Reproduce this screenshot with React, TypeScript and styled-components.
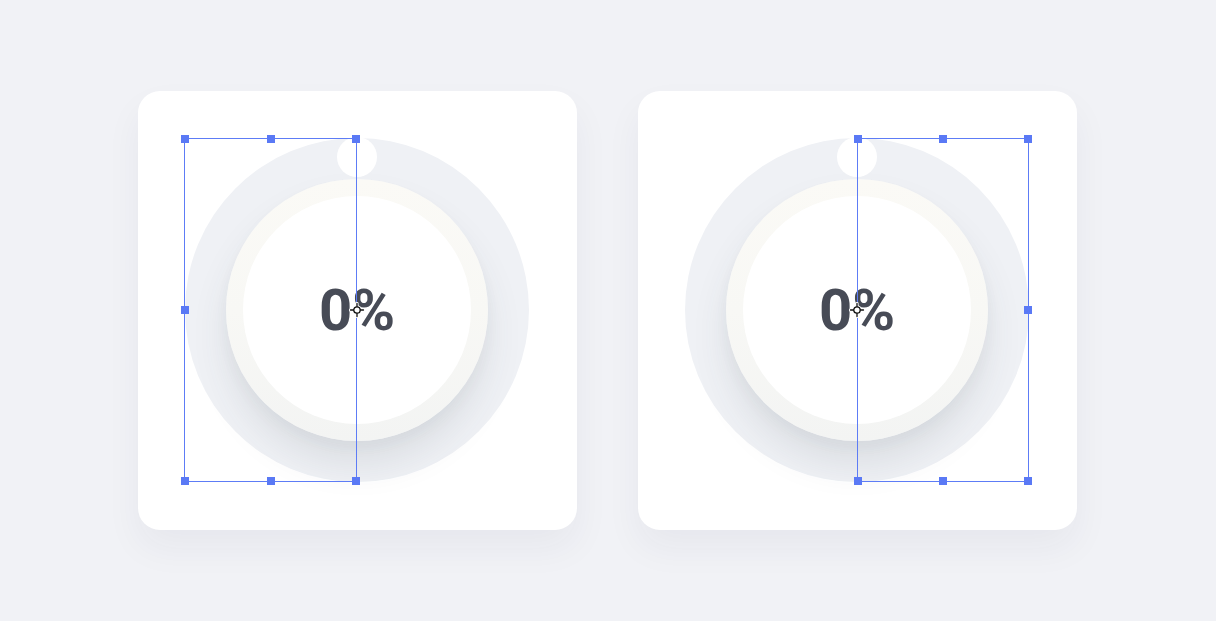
import React from 'react';
import styled, {createGlobalStyle} from 'styled-components';

const GlobalStyle = createGlobalStyle`
  html, body {
    margin: 0;
    padding: 0;
    background: #f1f2f6;
    font-family: Roboto, "Liberation Sans", sans-serif;
  }
`;

const Page = styled.main`
  box-sizing: border-box;
  display: flex;
  align-items: center;
  justify-content: center;
  gap: 61px;
  width: 1216px;
  height: 621px;
  padding: 0 2px 1px 0;
  background: #f1f2f6;
`;

const Card = styled.section`
  display: flex;
  align-items: center;
  justify-content: center;
  width: 439px;
  height: 439px;
  border-radius: 22px;
  background: #ffffff;
  box-shadow: 0 18px 36px rgba(40, 48, 70, 0.05);
`;

const Dial = styled.div`
  position: relative;
  display: flex;
  align-items: center;
  justify-content: center;
  width: 344px;
  height: 344px;
  border-radius: 50%;
  background: #eff1f5;
`;

const Knob = styled.span`
  position: absolute;
  top: -1px;
  left: 50%;
  width: 40px;
  height: 40px;
  margin-left: -20px;
  border-radius: 50%;
  background: #ffffff;
`;

const Ring = styled.div`
  display: flex;
  align-items: center;
  justify-content: center;
  width: 262px;
  height: 262px;
  border-radius: 50%;
  background: linear-gradient(180deg, #fbfaf6 0%, #f8f8f5 50%, #f3f4f3 100%);
  box-shadow: 0 24px 36px rgba(60, 66, 80, 0.1), 0 8px 14px rgba(60, 66, 80, 0.04);
`;

const Face = styled.div`
  display: flex;
  align-items: center;
  justify-content: center;
  width: 228px;
  height: 228px;
  border-radius: 50%;
  background: #ffffff;
`;

const Value = styled.span`
  font-size: 58px;
  font-weight: 700;
  color: #474b56;
  line-height: 1;
`;

const Selection = styled.div<{$side: 'left' | 'right'}>`
  position: absolute;
  top: 0;
  bottom: 0;
  ${({$side}) => ($side === 'left' ? 'left: -1px; right: 50%;' : 'left: 50%; right: 0;')}
  border: 1.5px solid #5d7cf6;
  pointer-events: none;
`;

const Handle = styled.span<{$x: number; $y: number}>`
  position: absolute;
  left: ${({$x}) => $x}%;
  top: ${({$y}) => $y}%;
  width: 8px;
  height: 8px;
  margin: -4px 0 0 -4px;
  background: #5a79f5;
`;

const Cursor = styled.svg`
  position: absolute;
  left: 50%;
  top: 50%;
  margin: -8px 0 0 -8px;
`;

const handles: Array<[number, number]> = [
  [0, 0], [50, 0], [100, 0],
  [0, 50], [100, 50],
  [0, 100], [50, 100], [100, 100],
];

const Knobber: React.FC<{side: 'left' | 'right'}> = ({side}) => (
  <Card>
    <Dial>
      <Knob />
      <Ring>
        <Face>
          <Value>0%</Value>
        </Face>
      </Ring>
      <Selection $side={side}>
        {handles
          .filter(([x, y]) => !(y === 50 && ((side === 'left' && x === 100) || (side === 'right' && x === 0))))
          .map(([x, y]) => (
            <Handle key={`${x}-${y}`} $x={x} $y={y} />
          ))}
      </Selection>
      <Cursor width="16" height="16" viewBox="0 0 16 16">
        <g stroke="#ffffff" strokeWidth="3.2" fill="none" strokeLinecap="round">
          <circle cx="8" cy="8" r="3.2" />
          <path d="M8 1.5v3M8 11.5v3M1.5 8h3M11.5 8h3" />
        </g>
        <g stroke="#111" strokeWidth="1.3" fill="#fff" strokeLinecap="round">
          <circle cx="8" cy="8" r="3.2" />
          <path d="M8 1.5v3M8 11.5v3M1.5 8h3M11.5 8h3" />
        </g>
      </Cursor>
    </Dial>
  </Card>
);

export default function App() {
  return (
    <>
      <GlobalStyle />
      <Page>
        <Knobber side="left" />
        <Knobber side="right" />
      </Page>
    </>
  );
}
